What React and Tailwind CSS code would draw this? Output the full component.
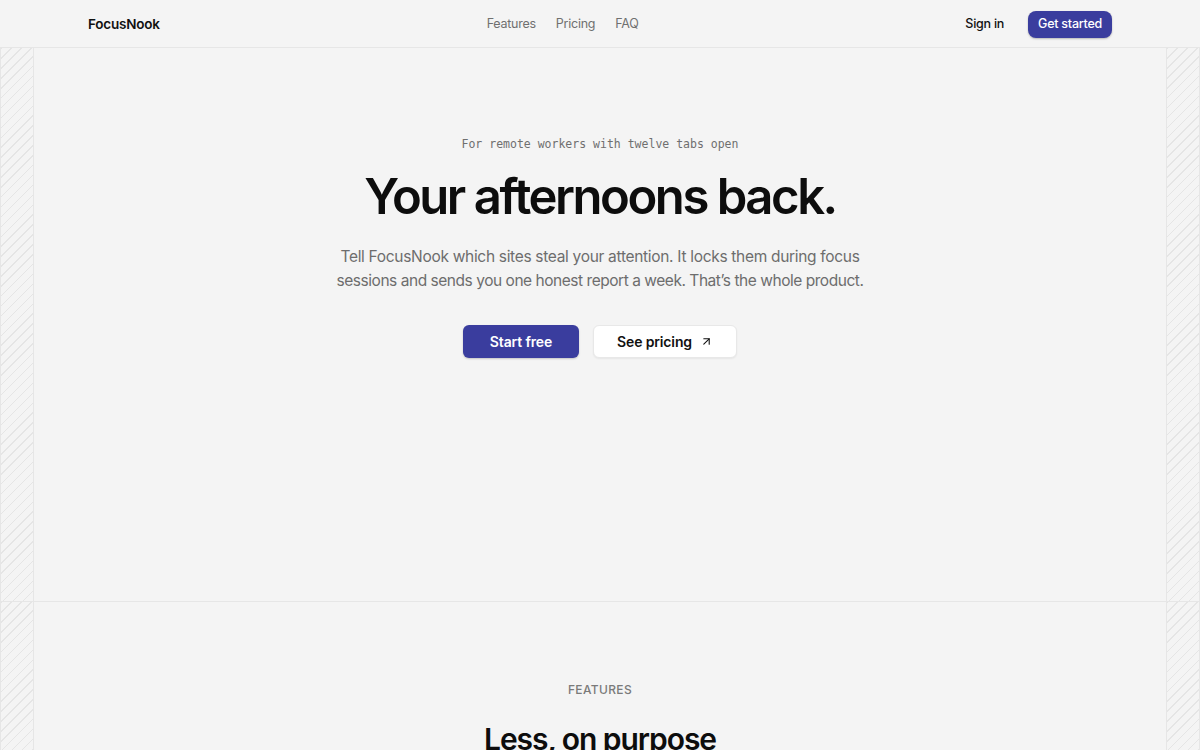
import React from "react";
import { ArrowUpRight } from "lucide-react";

const hatch =
  "bg-[repeating-linear-gradient(135deg,#e5e5e5_0px,#e5e5e5_1px,transparent_1px,transparent_7px)]";

function Rail() {
  return <div className={`w-[34px] shrink-0 border-x border-[#e6e6e6] ${hatch}`} />;
}

function Section({ children, className = "" }) {
  return (
    <div className="flex border-b border-[#e6e6e6]">
      <Rail />
      <div className={`flex-1 ${className}`}>{children}</div>
      <Rail />
    </div>
  );
}

export default function App() {
  return (
    <div className="min-h-screen bg-[#f4f4f4] text-[#111] font-['Inter',sans-serif]">
      <header className="h-[48px] border-b border-[#e6e6e6]">
        <div className="mx-auto flex h-full max-w-5xl items-center justify-between pt-[1px]">
          <a className="text-[13.5px] font-semibold tracking-[-0.015em] text-[#111]">FocusNook</a>
          <nav className="flex items-center gap-5 text-[12.5px] tracking-[-0.02em] text-[#707070]">
            <a>Features</a>
            <a>Pricing</a>
            <a>FAQ</a>
          </nav>
          <div className="flex items-center gap-6">
            <a className="text-[12.5px] font-medium tracking-[-0.02em] text-[#111]">Sign in</a>
            <button className="h-[27px] rounded-lg bg-[#3a3d9e] px-[10px] text-[12.5px] font-medium tracking-[-0.02em] text-white shadow-[0_1px_2px_rgba(0,0,0,0.25)]">
              Get started
            </button>
          </div>
        </div>
      </header>

      <Section className="h-[553px] pt-[88px]">
        <div className="flex flex-col items-center text-center">
          <p className="font-['DejaVu_Sans_Mono',monospace] text-[11.5px] text-[#6f6f6f]">
            For remote workers with twelve tabs open
          </p>
          <h1 className="mt-[17px] text-[49px] font-semibold leading-[1.1] tracking-[-0.05em] text-[#0d0d0d]">
            Your afternoons back.
          </h1>
          <p className="mt-[21px] max-w-[550px] text-[15.5px] leading-[24px] tracking-[-0.02em] text-[#6d6d6d]">
            Tell FocusNook which sites steal your attention. It locks them during focus
            <br />
            <span className="tracking-[-0.03em]">
              sessions and sends you one honest report a week. That’s the whole product.
            </span>
          </p>
          <div className="mt-[32px] flex items-center gap-[14px]">
            <button className="h-[33px] w-[116px] rounded-md bg-[#3a3d9e] text-[14px] font-semibold tracking-[-0.01em] text-white shadow-[0_1px_2px_rgba(0,0,0,0.2)]">
              Start free
            </button>
            <button className="flex h-[33px] w-[144px] items-center justify-center gap-[8px] rounded-md border border-[#e8e8e8] bg-white text-[14px] font-semibold tracking-[-0.01em] text-[#111] shadow-[0_1px_2px_rgba(0,0,0,0.06)]">
              See pricing
              <ArrowUpRight size={13} strokeWidth={2} />
            </button>
          </div>
        </div>
      </Section>

      <Section className="h-[400px] pt-[79px]">
        <div className="flex flex-col items-center text-center">
          <p className="text-[12px] font-medium uppercase tracking-[0.03em] text-[#7a7a7a]">Features</p>
          <h2 className="mt-[18px] text-[30px] font-semibold tracking-[-0.035em] text-[#0d0d0d]">
            Less, on purpose
          </h2>
        </div>
      </Section>
    </div>
  );
}
